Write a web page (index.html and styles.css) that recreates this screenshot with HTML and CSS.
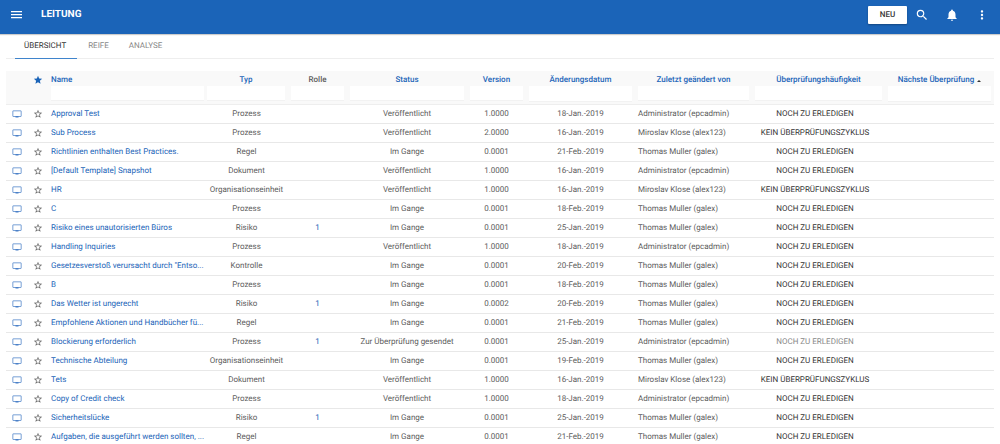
FILE: index.html
```html
<!DOCTYPE html>
<html lang="de">
<head>
  <meta charset="UTF-8">
  <meta name="viewport" content="width=device-width, initial-scale=1">
  <title>Leitung</title>
  <link rel="stylesheet" href="styles.css">
  <script src="table.js" defer></script>
</head>
<body>
  <svg class="sprite" aria-hidden="true">
    <symbol id="monitor" viewBox="0 0 20 20"><path d="M17.500 3h-15C1.700 3 1 3.700 1 4.500v9.500c0 .8.700 1.500 1.500 1.500H7V17h6v-1.500h4.500c.8 0 1.500-.7 1.500-1.500V4.500c0-.8-.7-1.500-1.500-1.500zm0 11h-15V4.500h15V14z"/></symbol>
    <symbol id="star-outline" viewBox="0 0 24 24"><path d="M22 9.240l-7.190-.62L12 2 9.190 8.630 2 9.240l5.460 4.730L5.820 21 12 17.270 18.180 21l-1.630-7.030L22 9.240zM12 15.400l-3.760 2.270 1-4.280-3.320-2.880 4.380-.38L12 6.100l1.710 4.040 4.380.38-3.320 2.880 1 4.280L12 15.400z"/></symbol>
    <symbol id="star" viewBox="0 0 24 24"><path d="M12 17.270L18.180 21l-1.640-7.030L22 9.240l-7.190-.61L12 2 9.190 8.630 2 9.240l5.460 4.730L5.820 21z"/></symbol>
  </svg>

  <header class="topbar">
    <button class="icon-btn" type="button" aria-label="Menü">
      <svg viewBox="0 0 12 8"><path d="M0 0h11v1.300H0zM0 3h11v1.300H0zM0 6h11v1.300H0z"/></svg>
    </button>
    <h1>LEITUNG</h1>
    <div class="actions">
      <button class="new-btn" type="button">NEU</button>
      <button class="icon-btn" type="button" aria-label="Suchen">
        <svg viewBox="0 0 24 24"><path d="M15.500 14h-.79l-.28-.27A6.470 6.470 0 0 0 16 9.500 6.500 6.500 0 1 0 9.500 16c1.610 0 3.090-.59 4.230-1.570l.27.28v.79l5 4.990L20.490 19l-4.990-5zm-6 0C7.010 14 5 11.990 5 9.500S7.010 5 9.500 5 14 7.010 14 9.500 11.990 14 9.500 14z"/></svg>
      </button>
      <button class="icon-btn" type="button" aria-label="Benachrichtigungen">
        <svg viewBox="0 0 24 24"><path d="M12 22c1.100 0 2-.9 2-2h-4c0 1.100.89 2 2 2zm6-6v-5c0-3.070-1.640-5.640-4.500-6.320V4c0-.83-.67-1.500-1.500-1.500s-1.500.67-1.500 1.500v.68C7.630 5.360 6 7.920 6 11v5l-2 2v1h16v-1l-2-2z"/></svg>
      </button>
      <button class="icon-btn" type="button" aria-label="Mehr">
        <svg viewBox="0 0 24 24"><path d="M12 8c1.100 0 2-.9 2-2s-.9-2-2-2-2 .9-2 2 .9 2 2 2zm0 2c-1.100 0-2 .9-2 2s.9 2 2 2 2-.9 2-2-.9-2-2-2zm0 6c-1.100 0-2 .9-2 2s.9 2 2 2 2-.9 2-2-.9-2-2-2z"/></svg>
      </button>
    </div>
  </header>

  <main>
    <nav class="tabs">
      <a class="active" href="#uebersicht">ÜBERSICHT</a>
      <a href="#reife">REIFE</a>
      <a href="#analyse">ANALYSE</a>
    </nav>

    <table class="grid">
      <colgroup>
        <col class="w-icon"><col class="w-icon"><col class="w-name"><col class="w-type"><col class="w-small">
        <col class="w-status"><col class="w-small"><col class="w-date"><col class="w-user"><col class="w-cycle"><col class="w-date">
      </colgroup>
      <thead>
        <tr>
          <th></th>
          <th class="fav"><svg class="icon"><use href="#star"/></svg></th>
          <th class="name"><a href="#name">Name</a><input type="text" aria-label="Name"></th>
          <th class="type"><a href="#typ">Typ</a><input type="text" aria-label="Typ"></th>
          <th><span>Rolle</span><input type="text" aria-label="Rolle"></th>
          <th><a href="#status">Status</a><input type="text" aria-label="Status"></th>
          <th><a href="#version">Version</a><input type="text" aria-label="Version"></th>
          <th><a href="#datum">Änderungsdatum</a><input class="date" type="text" aria-label="Änderungsdatum"></th>
          <th><a href="#user">Zuletzt geändert von</a><input type="text" aria-label="Zuletzt geändert von"></th>
          <th><a href="#zyklus">Überprüfungshäufigkeit</a><input type="text" aria-label="Überprüfungshäufigkeit"></th>
          <th><a class="sorted" href="#naechste">Nächste Überprüfung</a><input class="date" type="text" aria-label="Nächste Überprüfung"></th>
        </tr>
      </thead>
      <tbody id="rows"></tbody>
    </table>
  </main>
</body>
</html>
```

FILE: styles.css
```css
* { box-sizing: border-box; }
body {
  margin: 0;
  font: 8px/12px Roboto, sans-serif;
  text-rendering: geometricPrecision;
  color: #5c5c5c;
  background: #fff;
  overflow: hidden;
}
a { color: #1b64b8; text-decoration: none; }
button, input { font: inherit; border: 0; margin: 0; }
button { text-rendering: inherit; }
svg { display: block; fill: currentColor; }
.sprite { display: none; }

.topbar {
  display: flex;
  align-items: center;
  height: 34px;
  padding: 0 11px 5px;
  background: #1b64b8;
  box-shadow: 0 1px 1px rgba(0,0,0,0.2);
  color: #fff;
}
.topbar h1 {
  margin: 0 0 0 18px;
  font-size: 10px;
  line-height: 13px;
  font-weight: 700;
}
.actions {
  display: flex;
  align-items: center;
  gap: 16px;
  margin-left: auto;
}
.icon-btn {
  padding: 0;
  background: none;
  color: inherit;
}
.icon-btn svg { width: 12px; height: 8px; }
.actions .icon-btn svg { width: 14px; height: 14px; }
.new-btn {
  width: 39px;
  height: 18px;
  margin-right: -8px;
  padding: 0;
  border-radius: 1px;
  background: #fff;
  box-shadow: 0 1px 2px rgba(0,0,0,0.3);
  color: #333;
  font-weight: 500;
}

main { padding: 0 6px; }
.tabs {
  display: flex;
  gap: 2px;
  height: 25px;
  padding-left: 9px;
  border-bottom: 1px solid #eee;
}
.tabs a {
  height: 25px;
  padding: 6px 9px 0;
  color: #888;
}
.tabs .active {
  padding-right: 11px;
  color: #333;
  border-bottom: 1px solid #3f84cc;
}

.grid {
  width: 100%;
  margin-top: 12px;
  table-layout: fixed;
  border-collapse: separate;
  border-spacing: 0;
}
.w-icon { width: 21px; }
.w-name { width: 157px; }
.w-type { width: 83px; }
.w-small { width: 59px; }
.w-status { width: 120px; }
.w-date { width: 109px; }
.w-user { width: 117px; }
.w-cycle { width: 133px; }

.grid th {
  height: 34px;
  padding: 3px 3px 0;
  background: #f9f9f9;
  border-bottom: 1px solid #eee;
  font-weight: 500;
  text-align: center;
  vertical-align: top;
}
.grid th input {
  display: block;
  width: 100%;
  height: 15px;
  background: #fff;
  border-bottom: 1px solid #f2f2f2;
}
.grid th input.date { height: 16px; }
.grid th.name { padding-right: 1px; text-align: left; }
.grid th.type { padding-left: 2px; }
.grid th.fav { padding: 4px 0 0 6px; color: #1b64b8; }
.sorted::after {
  content: "";
  display: inline-block;
  margin-left: 3px;
  border: 2px solid transparent;
  border-top: 0;
  border-bottom-color: #333;
}

.grid td {
  height: 19px;
  padding: 0 3px;
  border-bottom: 1px solid #e8e8e8;
  text-align: center;
  white-space: nowrap;
}
.grid td.name { text-align: left; }
.grid td.user { text-align: left; }
.grid td.cycle { padding-right: 10px; color: #333; }
.grid td.cycle.muted { color: #888; }
.grid td.tool { padding: 0 0 0 6px; }
.tool button { display: block; padding: 0; background: none; color: #666; }
.tool .view { color: #4a80c8; }
.icon { width: 10px; height: 10px; }
```

FILE: table.js
```javascript
const TODO = 'NOCH ZU ERLEDIGEN';
const NONE = 'KEIN ÜBERPRÜFUNGSZYKLUS';
const ADMIN = 'Administrator (epcadmin)';
const KLOSE = 'Miroslav Klose (alex123)';
const MULLER = 'Thomas Muller (galex)';

// name, type, role, status, version, changed, user, review cycle
const data = [
  ['Approval Test', 'Prozess', '', 'Veröffentlicht', '1.0000', '18-Jan.-2019', ADMIN, TODO],
  ['Sub Process', 'Prozess', '', 'Veröffentlicht', '2.0000', '16-Jan.-2019', KLOSE, NONE],
  ['Richtlinien enthalten Best Practices.', 'Regel', '', 'Im Gange', '0.0001', '21-Feb.-2019', MULLER, TODO],
  ['[Default Template] Snapshot', 'Dokument', '', 'Veröffentlicht', '1.0000', '16-Jan.-2019', ADMIN, TODO],
  ['HR', 'Organisationseinheit', '', 'Veröffentlicht', '1.0000', '16-Jan.-2019', KLOSE, NONE],
  ['C', 'Prozess', '', 'Im Gange', '0.0001', '18-Feb.-2019', MULLER, TODO],
  ['Risiko eines unautorisierten Büros', 'Risiko', '1', 'Im Gange', '0.0001', '25-Jan.-2019', MULLER, TODO],
  ['Handling Inquiries', 'Prozess', '', 'Veröffentlicht', '1.0000', '18-Jan.-2019', ADMIN, TODO],
  ['Gesetzesverstoß verursacht durch "Entso...', 'Kontrolle', '', 'Im Gange', '0.0001', '20-Feb.-2019', MULLER, TODO],
  ['B', 'Prozess', '', 'Im Gange', '0.0001', '18-Feb.-2019', MULLER, TODO],
  ['Das Wetter ist ungerecht', 'Risiko', '1', 'Im Gange', '0.0002', '20-Feb.-2019', MULLER, TODO],
  ['Empfohlene Aktionen und Handbücher fü...', 'Regel', '', 'Im Gange', '0.0001', '21-Feb.-2019', MULLER, TODO],
  ['Blockierung erforderlich', 'Prozess', '1', 'Zur Überprüfung gesendet', '0.0001', '25-Jan.-2019', ADMIN, TODO, 'muted'],
  ['Technische Abteilung', 'Organisationseinheit', '', 'Im Gange', '0.0001', '19-Feb.-2019', MULLER, TODO],
  ['Tets', 'Dokument', '', 'Veröffentlicht', '1.0000', '16-Jan.-2019', KLOSE, NONE],
  ['Copy of Credit check', 'Prozess', '', 'Veröffentlicht', '1.0000', '18-Jan.-2019', ADMIN, TODO],
  ['Sicherheitslücke', 'Risiko', '1', 'Im Gange', '0.0001', '25-Jan.-2019', MULLER, TODO],
  ['Aufgaben, die ausgeführt werden sollten, ...', 'Regel', '', 'Im Gange', '0.0001', '21-Feb.-2019', MULLER, TODO]
];

document.getElementById('rows').innerHTML = data.map(row => `
  <tr>
    <td class="tool"><button class="view" type="button" aria-label="Anzeigen"><svg class="icon"><use href="#monitor"/></svg></button></td>
    <td class="tool"><button type="button" aria-label="Favorit"><svg class="icon"><use href="#star-outline"/></svg></button></td>
    <td class="name"><a href="#">${row[0]}</a></td>
    <td>${row[1]}</td>
    <td>${row[2] ? `<a href="#">${row[2]}</a>` : ''}</td>
    <td>${row[3]}</td>
    <td>${row[4]}</td>
    <td>${row[5]}</td>
    <td class="user">${row[6]}</td>
    <td class="cycle ${row[8] || ''}">${row[7]}</td>
    <td></td>
  </tr>`).join('');
```
